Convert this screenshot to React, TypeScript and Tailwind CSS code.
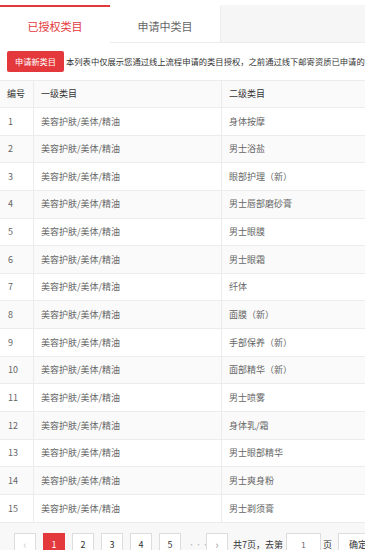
import React from 'react';

const rows = [
  '身体按摩',
  '男士浴盐',
  '眼部护理（新）',
  '男士唇部磨砂膏',
  '男士眼膜',
  '男士眼霜',
  '纤体',
  '面膜（新）',
  '手部保养（新）',
  '面部精华（新）',
  '男士喷雾',
  '身体乳/霜',
  '男士眼部精华',
  '男士爽身粉',
  '男士剃须膏',
];

const font = { fontFamily: '"Noto Sans CJK SC", "Noto Sans", sans-serif' };

function Tabs() {
  return (
    <div className="pt-[5px] bg-white">
      <div className="flex h-[38px] bg-[#f6f6f6] border-b border-[#ececec]">
        <div className="w-[110px] bg-white border-t-2 border-[#e4393c] -mb-px pt-[3px] flex items-center justify-center text-[11px] text-[#e4393c]">
          已授权类目
        </div>
        <div className="w-[111px] bg-white border-t-2 border-transparent border-r border-r-[#ececec] pt-[3px] flex items-center justify-center text-[11px] text-[#666]">
          申请中类目
        </div>
      </div>
    </div>
  );
}

function Notice() {
  return (
    <div className="flex items-center h-[37px] pl-[7px] whitespace-nowrap overflow-hidden">
      <button className="h-[21px] w-[57px] shrink-0 rounded-[2px] bg-[#e4393c] text-white text-[8.2px] flex items-center justify-center">
        申请新类目
      </button>
      <span className="ml-[2px] text-[8.3px] text-[#333]">
        本列表中仅展示您通过线上流程申请的类目授权，之前通过线下邮寄资质已申请的
      </span>
    </div>
  );
}

function Table() {
  return (
    <div className="border-t border-[#ececec]">
      <div className="flex h-[27px] bg-[#fafafa] border-b border-[#ececec] text-[9px] text-[#333]">
        <div className="w-[34px] pl-[7px] flex items-center border-r border-[#ececec]">编号</div>
        <div className="w-[188px] pl-[7px] flex items-center border-r border-[#ececec]">一级类目</div>
        <div className="flex-1 pl-[7px] flex items-center">二级类目</div>
      </div>
      {rows.map((r, i) => (
        <div
          key={i}
          className={`flex h-[27.65px] border-b border-[#ececec] text-[9px] text-[#666] ${i % 2 === 1 ? 'bg-[#fafafa]' : 'bg-white'}`}
        >
          <div className="w-[34px] pl-[8px] flex items-center border-r border-[#ececec]">{i + 1}</div>
          <div className="w-[188px] pl-[7px] flex items-center border-r border-[#ececec]">美容护肤/美体/精油</div>
          <div className="flex-1 pl-[7px] flex items-center">{r}</div>
        </div>
      ))}
    </div>
  );
}

function PageBox({ children, active }: { children: React.ReactNode; active?: boolean }) {
  return (
    <div
      className={`w-[22px] h-[24px] shrink-0 flex items-center justify-center text-[9px] border ${
        active ? 'bg-[#e4393c] border-[#e4393c] text-white' : 'bg-white border-[#dddddd] text-[#333]'
      }`}
    >
      {children}
    </div>
  );
}

function Pager() {
  return (
    <div className="flex-1 bg-[#f8f8f8] pt-[10px] pl-[14px] flex items-start whitespace-nowrap overflow-hidden">
      <div className="flex items-center gap-[7px]">
        <PageBox>
          <span className="text-[#ccc] text-[11px]">‹</span>
        </PageBox>
        <PageBox active>1</PageBox>
        <PageBox>2</PageBox>
        <PageBox>3</PageBox>
        <PageBox>4</PageBox>
        <PageBox>5</PageBox>
        <span className="w-[11px] text-center text-[7px] text-[#bbb]">···</span>
        <PageBox>
          <span className="text-[#999] text-[11px]">›</span>
        </PageBox>
      </div>
      <div className="flex items-center h-[24px] ml-[5px] text-[9px] text-[#333]">
        <span>共7页，去第</span>
        <div className="ml-[3px] w-[35px] h-[24px] bg-white border border-[#dddddd] flex items-center justify-center text-[#666] text-[8px]">
          1
        </div>
        <span className="ml-[2px]">页</span>
        <div className="ml-[6px] w-[40px] h-[24px] bg-white border border-[#dddddd] flex items-center justify-center">
          确定
        </div>
      </div>
    </div>
  );
}

export default function App() {
  return (
    <div className="w-[365px] h-[550px] overflow-hidden bg-white flex flex-col" style={font}>
      <Tabs />
      <Notice />
      <Table />
      <Pager />
    </div>
  );
}
